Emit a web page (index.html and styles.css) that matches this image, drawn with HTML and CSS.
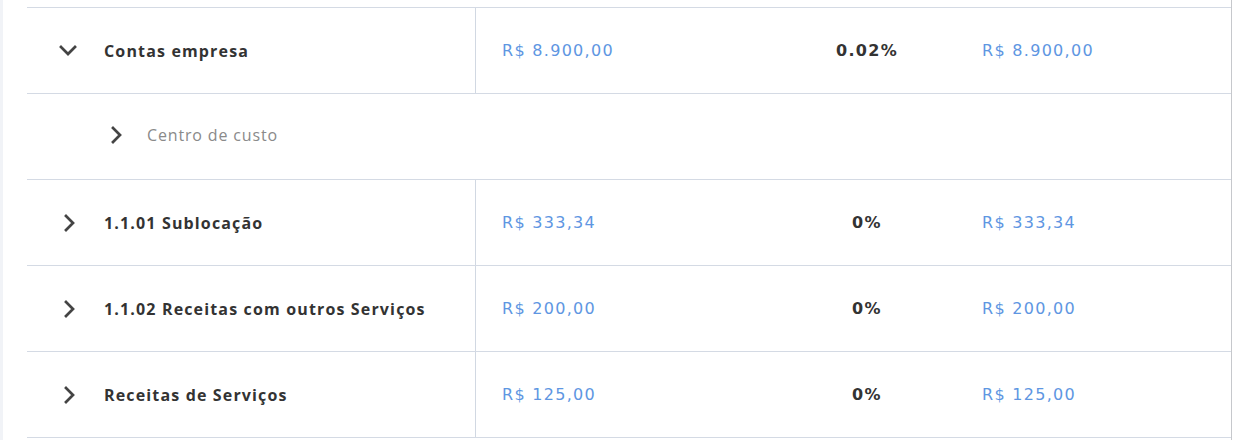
FILE: index.html
```html
<!DOCTYPE html>
<html lang="pt-BR">
<head>
<meta charset="utf-8">
<link rel="stylesheet" href="styles.css">
</head>
<body>
<div class="page">
  <div class="strip"></div>
  <div class="main">
    <div class="table">
      <div class="row">
        <div class="cell name">
          <svg class="chev-down" width="20" height="14" viewBox="0 0 20 14"><polyline points="3,3 10,10 17,3"/></svg>
          <span class="label">Contas empresa</span>
        </div>
        <div class="cell money">R$ 8.900,00</div>
        <div class="cell pct">0.02%</div>
        <div class="cell money">R$ 8.900,00</div>
      </div>
      <div class="row sub">
        <div class="cell subname">
          <svg class="chev-right" width="14" height="20" viewBox="0 0 14 20"><polyline points="4,3 11,10 4,17"/></svg>
          <span class="sublabel">Centro de custo</span>
        </div>
      </div>
      <div class="row">
        <div class="cell name">
          <svg class="chev-right" width="14" height="20" viewBox="0 0 14 20"><polyline points="4,3 11,10 4,17"/></svg>
          <span class="label">1.1.01 Sublocação</span>
        </div>
        <div class="cell money">R$ 333,34</div>
        <div class="cell pct">0%</div>
        <div class="cell money">R$ 333,34</div>
      </div>
      <div class="row">
        <div class="cell name">
          <svg class="chev-right" width="14" height="20" viewBox="0 0 14 20"><polyline points="4,3 11,10 4,17"/></svg>
          <span class="label">1.1.02 Receitas com outros Serviços</span>
        </div>
        <div class="cell money">R$ 200,00</div>
        <div class="cell pct">0%</div>
        <div class="cell money">R$ 200,00</div>
      </div>
      <div class="row">
        <div class="cell name">
          <svg class="chev-right" width="14" height="20" viewBox="0 0 14 20"><polyline points="4,3 11,10 4,17"/></svg>
          <span class="label">Receitas de Serviços</span>
        </div>
        <div class="cell money">R$ 125,00</div>
        <div class="cell pct">0%</div>
        <div class="cell money">R$ 125,00</div>
      </div>
    </div>
  </div>
</div>
</body>
</html>
```

FILE: styles.css
```css
* { box-sizing: border-box; }
html, body { margin: 0; padding: 0; background: #fff; }
body { font-family: "Open Sans", "Noto Sans", sans-serif; }

.page {
  display: flex;
  width: 1233px;
  height: 440px;
  overflow: hidden;
}
.strip {
  width: 3px;
  flex: none;
  background: #f1f3f7;
}
.main {
  width: 1229px;
  flex: none;
  padding: 7px 0 0 24px;
  border-right: 1px solid #c6c8cc;
}
.table {
  border-top: 1px solid #d4dae4;
}
.row {
  display: grid;
  grid-template-columns: 449px 302px 178px 1fr;
  height: 86px;
  border-bottom: 1px solid #d4dae4;
}
.row.sub {
  grid-template-columns: 1fr;
}
.cell {
  display: flex;
  align-items: center;
}
.name {
  border-right: 1px solid #d1d8e2;
  padding-left: 27px;
}
.subname {
  padding-left: 82px;
  padding-bottom: 3px;
}
.chev-down, .chev-right {
  flex: none;
  fill: none;
  stroke: #444;
  stroke-width: 2.7;
  stroke-linecap: square;
}
.chev-down { margin-left: 4px; margin-right: 26px; }
.chev-right { margin-left: 8px; margin-right: 28px; }
.subname .chev-right { margin-left: 0; margin-right: 24px; }
.label {
  font-weight: 700;
  font-size: 16px;
  letter-spacing: 1.15px;
  color: #333;
}
.sublabel {
  font-size: 16px;
  letter-spacing: 0.85px;
  color: #8a8a8a;
}
.money {
  padding-left: 26px;
  font-family: "DejaVu Sans", sans-serif;
  font-size: 16px;
  letter-spacing: 1.3px;
  color: #5e96e2;
}
.pct {
  justify-content: center;
  font-family: "DejaVu Sans", sans-serif;
  font-weight: 700;
  font-size: 16px;
  letter-spacing: 1.3px;
  color: #333;
}
```
